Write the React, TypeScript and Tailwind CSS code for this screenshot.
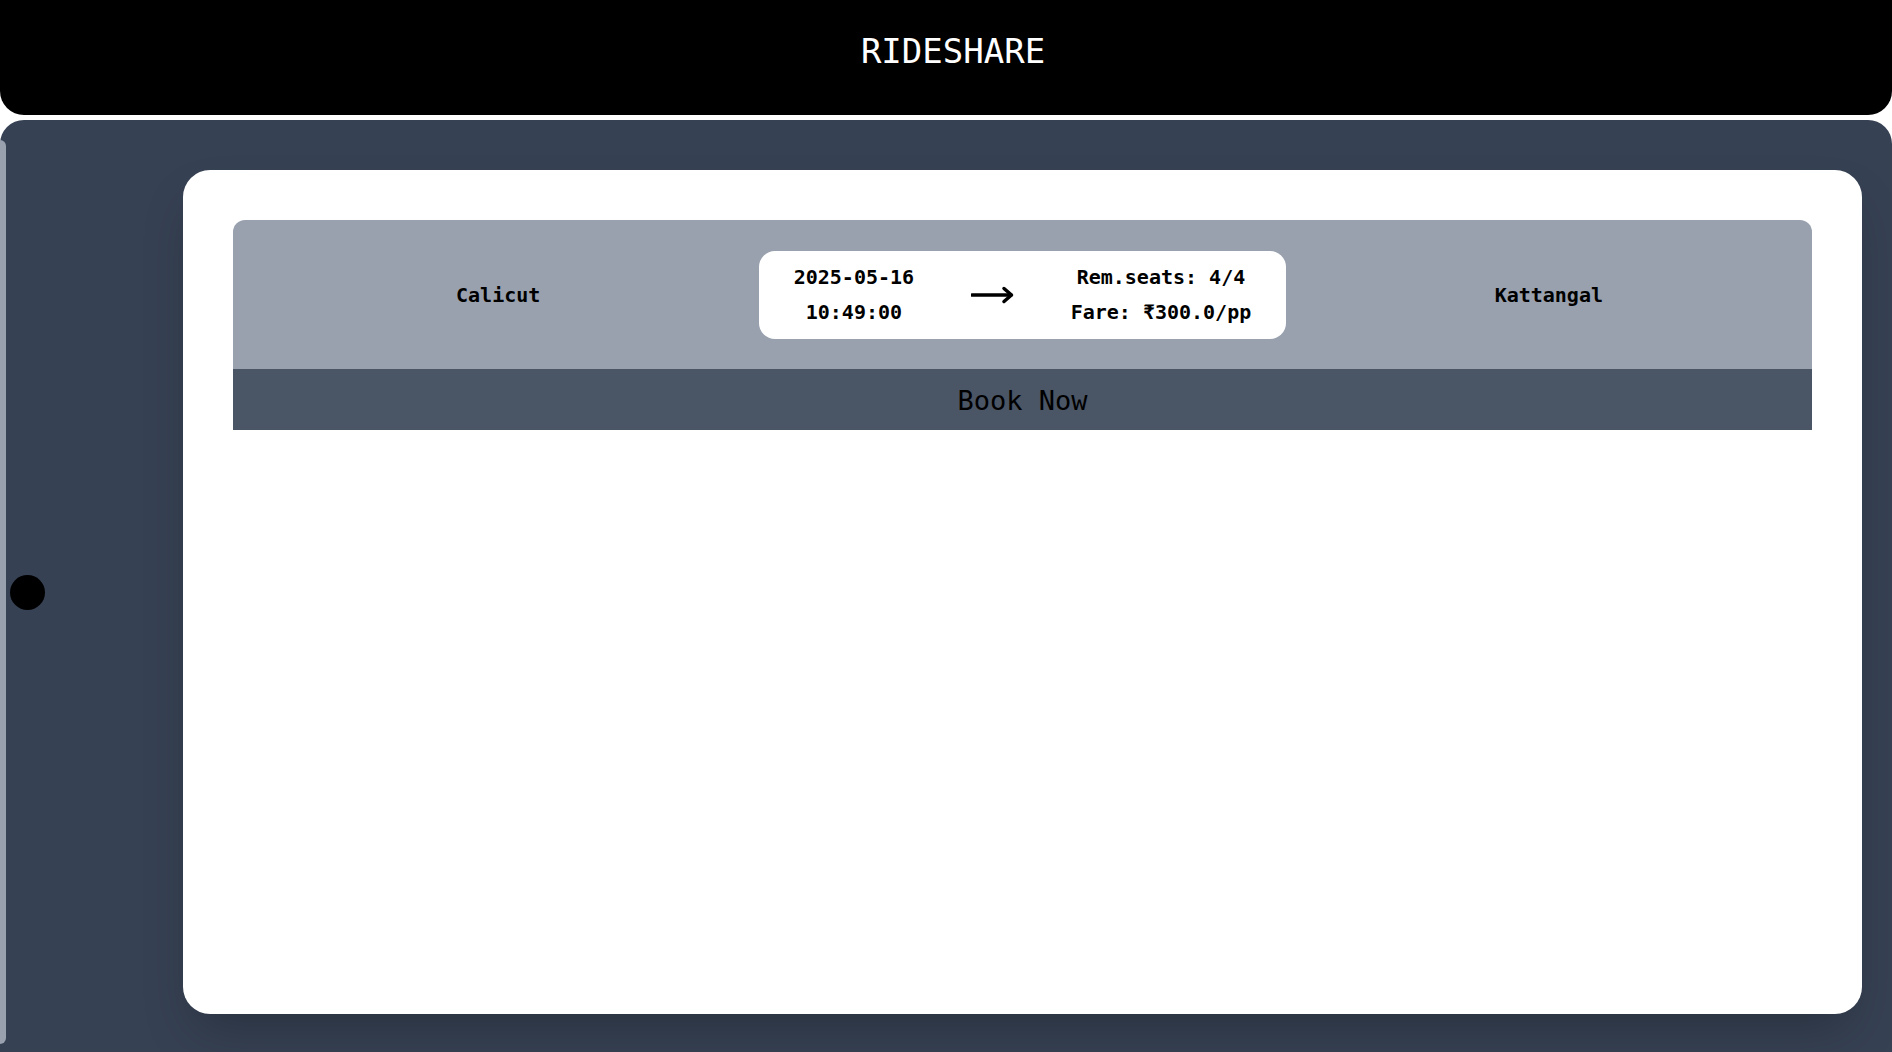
const mono = { fontFamily: '"DejaVu Sans Mono", monospace' };

const RIDE = {
  from: "Calicut",
  to: "Kattangal",
  date: "2025-05-16",
  time: "10:49:00",
  seats: "4/4",
  fare: "₹300.0/pp",
};

function Arrow() {
  return (
    <svg width="43" height="18" viewBox="0 0 43 18" fill="none">
      <path d="M1 9H40" stroke="black" strokeWidth="3.5" strokeLinecap="round" />
      <path d="M33 2.5L40.5 9L33 15.5" stroke="black" strokeWidth="3.5" strokeLinecap="round" strokeLinejoin="round" />
    </svg>
  );
}

function RideCard() {
  return (
    <div className="flex flex-col">
      {/* Route row */}
      <div className="grid grid-cols-3 items-center h-[149px] bg-gray-400 rounded-t-xl">
        <div className="text-center text-xl font-bold text-black pl-[4px]">{RIDE.from}</div>
        <div className="flex items-center justify-around bg-white rounded-2xl py-[9px] text-xl font-bold text-black leading-[35px]">
          <div className="text-center pl-[6px]">
            <p>{RIDE.date}</p>
            <p>{RIDE.time}</p>
          </div>
          <Arrow />
          <div className="text-center pr-[6px]">
            <p>Rem.seats: {RIDE.seats}</p>
            <p>Fare: {RIDE.fare}</p>
          </div>
        </div>
        <div className="text-center text-xl font-bold text-black">{RIDE.to}</div>
      </div>
      <button className="h-[61px] bg-gray-600 text-[27px] text-black pt-[4px]">Book Now</button>
    </div>
  );
}

export default function App() {
  return (
    <div className="h-[1052px] bg-white flex flex-col overflow-hidden" style={mono}>
      {/* Header */}
      <header className="h-[115px] shrink-0 bg-black rounded-b-[24px] flex items-center justify-center pb-[13px] pl-[14px]">
        <h1 className="text-[34px] leading-[34px] text-white">RIDESHARE</h1>
      </header>

      {/* Main panel */}
      <main className="relative mt-[5px] flex-1 flex bg-gray-700 rounded-t-[24px] pt-[20px] pb-[8px]">
        {/* Sidebar (collapsed) */}
        <aside className="w-[153px] shrink-0 flex">
          <div className="w-[6px] h-full bg-gray-400 rounded-r-lg" />
        </aside>

        <section className="flex-1 p-[30px]">
          <div className="h-full bg-white rounded-[27px] shadow-2xl p-[50px]">
            <RideCard />
          </div>
        </section>

        {/* Sidebar toggle */}
        <button className="absolute left-[10px] top-[455px] w-[35px] h-[35px] rounded-full bg-black" />
      </main>
    </div>
  );
}
